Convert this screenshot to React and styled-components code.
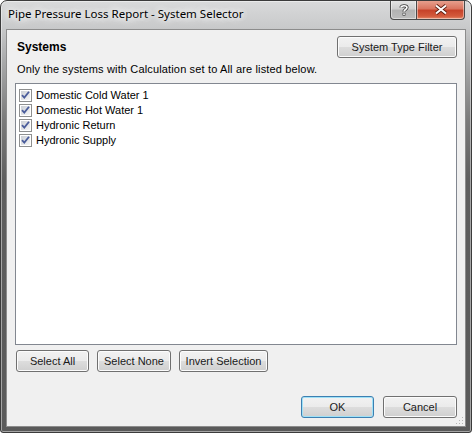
import styled, { createGlobalStyle } from "styled-components";

const GlobalStyle = createGlobalStyle`
    html, body {
        margin: 0;
        padding: 0;
        background: #ffffff;
    }
`;

const Window = styled.div`
    position: relative;
    width: 472px;
    height: 433px;
    box-sizing: border-box;
    border: 1px solid #3b3b3b;
    border-radius: 7px 7px 3px 3px;
    background: linear-gradient(
        to bottom,
        #d9dadb 0px,
        #c9cacb 26px,
        #a9aaab 60px,
        #7a7a7a 120px,
        #5e5e5e 180px,
        #5a5a5a 100%
    );
    box-shadow: inset 0 0 0 1px rgba(255, 255, 255, 0.45);
    display: flex;
    flex-direction: column;
    overflow: hidden;
`;

const TitleBar = styled.div`
    height: 28px;
    display: flex;
    align-items: flex-start;
    padding: 0 6px 0 7px;
`;

const Title = styled.div`
    margin-top: 5px;
    font-family: "Noto Sans", "Open Sans", sans-serif;
    font-size: 11.5px;
    color: #000;
    text-shadow: 0 0 6px #fff, 0 0 10px #fff, 0 0 12px #fff;
`;

const CaptionButtons = styled.div`
    margin-left: auto;
    margin-top: -1px;
    display: flex;
`;

const CaptionButton = styled.div`
    width: ${(p) => p.$w}px;
    height: 20px;
    box-sizing: border-box;
    display: flex;
    align-items: center;
    justify-content: center;
    border: 1px solid #4a4a4a;
    border-top: none;
    border-radius: ${(p) => (p.$close ? "0 0 4px 0" : "0 0 0 4px")};
    border-left: ${(p) => (p.$close ? "none" : "1px solid #4a4a4a")};
    background: ${(p) =>
        p.$close
            ? "linear-gradient(to bottom, #e8a493 0%, #d97560 45%, #c7432a 55%, #d35a3c 85%, #e58a6a 100%)"
            : "linear-gradient(to bottom, #e6e6e6 0%, #cfcfcf 45%, #b3b3b3 55%, #bdbdbd 100%)"};
    box-shadow: inset 0 0 0 1px rgba(255, 255, 255, 0.45);
`;

const Client = styled.div`
    position: relative;
    flex: 1;
    margin: 0 5px 5px;
    border: 1px solid #8c8c8c;
    background: #f0f0f0;
    display: flex;
    flex-direction: column;
    padding: 0 8px 0 8px;
    font-family: "Liberation Sans", Arial, sans-serif;
    font-size: 11px;
    color: #000;
`;

const HeaderRow = styled.div`
    margin-top: 6px;
    height: 22px;
    display: flex;
    align-items: center;
    justify-content: space-between;
`;

const Heading = styled.div`
    font-weight: bold;
    font-size: 12px;
    padding-left: 2px;
`;

const Description = styled.div`
    margin-top: 5px;
    height: 13px;
    line-height: 13px;
    padding-left: 2px;
    letter-spacing: 0.15px;
`;

const ListBox = styled.div`
    margin-top: 7px;
    height: 262px;
    box-sizing: border-box;
    border: 1px solid #828790;
    background: #ffffff;
    padding: 4px 3px;
    display: flex;
    flex-direction: column;
`;

const ListItem = styled.div`
    height: 15px;
    display: flex;
    align-items: center;
    gap: 4px;
    line-height: 15px;
`;

const ButtonRow = styled.div`
    margin-top: 5px;
    display: flex;
    gap: 8px;
    padding-left: 1px;
    justify-content: ${(p) => (p.$end ? "flex-end" : "flex-start")};
`;

const FooterRow = styled(ButtonRow)`
    margin-top: auto;
    margin-bottom: 8px;
    gap: 9px;
`;

const Button = styled.button`
    width: ${(p) => p.$w}px;
    height: 22px;
    box-sizing: border-box;
    padding: 0;
    font-family: "Liberation Sans", Arial, sans-serif;
    font-size: 11px;
    color: #1a1a1a;
    border: 1px solid ${(p) => (p.$default ? "#3c7fb1" : "#707070")};
    border-radius: 3px;
    background: linear-gradient(to bottom, #f2f2f2 0%, #ebebeb 50%, #dddddd 50%, #cfcfcf 100%);
    box-shadow: inset 0 0 0 1px ${(p) => (p.$default ? "#9fe1f7" : "#fcfcfc")};
`;

const Grip = styled.svg`
    position: absolute;
    right: 1px;
    bottom: 1px;
`;

const CheckBox = () => (
    <svg width="13" height="13" viewBox="0 0 13 13">
        <defs>
            <linearGradient id="cbg" x1="0" y1="0" x2="1" y2="1">
                <stop offset="0" stopColor="#cbcfd5" />
                <stop offset="1" stopColor="#f6f6f6" />
            </linearGradient>
        </defs>
        <rect x="0.5" y="0.5" width="12" height="12" fill="#fff" stroke="#8e8f8f" />
        <rect x="2" y="2" width="9" height="9" fill="url(#cbg)" />
        <path d="M3 6.2 L5.3 8.6 L10 2.8" fill="none" stroke="#4a5c9b" strokeWidth="1.8" />
    </svg>
);

const systems = [
    "Domestic Cold Water 1",
    "Domestic Hot Water 1",
    "Hydronic Return",
    "Hydronic Supply",
];

const App = () => {
    return (
        <>
            <GlobalStyle />
            <Window>
                <TitleBar>
                    <Title>Pipe Pressure Loss Report - System Selector</Title>
                    <CaptionButtons>
                        <CaptionButton $w={27}>
                            <svg width="10" height="12" viewBox="0 0 10 12">
                                <path
                                    d="M2 3.5 C2 1.2 8 1.2 8 3.6 C8 5.6 5 5.4 5 7.6"
                                    fill="none"
                                    stroke="#3a3a3a"
                                    strokeWidth="3.2"
                                />
                                <path
                                    d="M2 3.5 C2 1.2 8 1.2 8 3.6 C8 5.6 5 5.4 5 7.6"
                                    fill="none"
                                    stroke="#fff"
                                    strokeWidth="1.6"
                                />
                                <rect x="3.6" y="8.8" width="2.8" height="2.8" fill="#3a3a3a" />
                                <rect x="4.2" y="9.4" width="1.6" height="1.6" fill="#fff" />
                            </svg>
                        </CaptionButton>
                        <CaptionButton $w={48} $close>
                            <svg width="14" height="11" viewBox="0 0 14 11">
                                <path d="M2 1.5 L12 9.5 M12 1.5 L2 9.5" stroke="#5a1d10" strokeWidth="3.6" />
                                <path d="M2 1.5 L12 9.5 M12 1.5 L2 9.5" stroke="#fff" strokeWidth="2" />
                            </svg>
                        </CaptionButton>
                    </CaptionButtons>
                </TitleBar>
                <Client>
                    <HeaderRow>
                        <Heading>Systems</Heading>
                        <Button $w={120}>System Type Filter</Button>
                    </HeaderRow>
                    <Description>
                        Only the systems with Calculation set to All are listed below.
                    </Description>
                    <ListBox>
                        {systems.map((name) => (
                            <ListItem key={name}>
                                <CheckBox />
                                {name}
                            </ListItem>
                        ))}
                    </ListBox>
                    <ButtonRow>
                        <Button $w={73}>Select All</Button>
                        <Button $w={74}>Select None</Button>
                        <Button $w={89}>Invert Selection</Button>
                    </ButtonRow>
                    <FooterRow $end>
                        <Button $w={73} $default>
                            OK
                        </Button>
                        <Button $w={74}>Cancel</Button>
                    </FooterRow>
                    <Grip width="10" height="10" viewBox="0 0 10 10">
                        {[
                            [8, 2],
                            [8, 5],
                            [5, 5],
                            [8, 8],
                            [5, 8],
                            [2, 8],
                        ].map(([x, y]) => (
                            <rect key={`${x}-${y}`} x={x} y={y} width="1" height="1" fill="#b5b5b5" />
                        ))}
                    </Grip>
                </Client>
            </Window>
        </>
    );
};

export default App;
